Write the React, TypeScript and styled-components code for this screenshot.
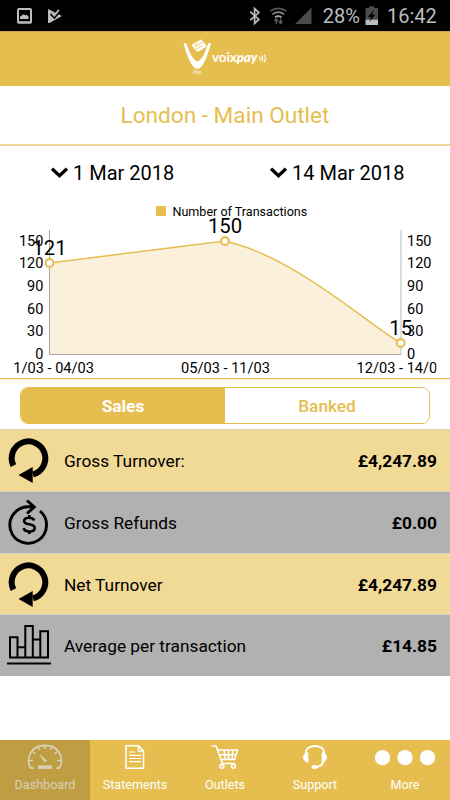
import React from "react";
import styled, { createGlobalStyle } from "styled-components";

const GOLD = "#e6be50";

const GlobalStyle = createGlobalStyle`
  * { box-sizing: border-box; }
  body { margin: 0; background: #fff; font-family: Roboto, sans-serif; color: #000; }
  svg { display: block; flex: none; }
`;

const Screen = styled.div`
  width: 450px;
  height: 800px;
  display: flex;
  flex-direction: column;
  background: #fff;
  overflow: hidden;
`;

const StatusBar = styled.div`
  height: 31px;
  flex: none;
  background: #000;
  color: #bdbdbd;
  font-size: 20px;
  line-height: 31px;
  display: flex;
  justify-content: space-between;
`;

const Battery = styled.span`
  margin-right: 5px;
`;

const Clock = styled.span`
  width: 49px;
  margin-left: 8px;
  white-space: nowrap;
`;

const StatusGroup = styled.div`
  display: flex;
  padding: 1px 14px 0 0;
`;

const Header = styled.header`
  height: 55px;
  flex: none;
  background: ${GOLD};
  border-top: 1px solid #cfa945;
  display: flex;
  justify-content: center;
`;

const Title = styled.h1`
  margin: 0;
  height: 60px;
  flex: none;
  border-bottom: 2px solid #f0d696;
  color: ${GOLD};
  font-size: 22.6px;
  font-weight: 400;
  line-height: 59px;
  text-align: center;
`;

const DateRow = styled.div`
  height: 54px;
  flex: none;
  display: grid;
  grid-template-columns: 219px 1fr;
  padding-left: 51px;
`;

const DatePicker = styled.div`
  display: flex;
  align-items: center;
  gap: 5px;
  font-size: 20px;
  line-height: 54px;
`;

const ChartPanel = styled.div`
  height: 179px;
  flex: none;
  border-bottom: 1px solid ${GOLD};
  box-shadow: 0 1px 0 #faf0d8;
`;

const Segments = styled.div`
  margin: 8px 20px 5px;
  height: 37px;
  flex: none;
  display: grid;
  grid-template-columns: 1fr 1fr;
  border: 1px solid ${GOLD};
  border-radius: 8px;
  overflow: hidden;
`;

const Segment = styled.div<{ $active?: boolean }>`
  background: ${(p) => (p.$active ? GOLD : "#fff")};
  color: ${(p) => (p.$active ? "#fff" : GOLD)};
  font-size: 17.3px;
  font-weight: ${(p) => (p.$active ? 700 : 500)};
  line-height: 37px;
  text-align: center;
`;

const Row = styled.div<{ $tone: "gold" | "grey" }>`
  height: 61.8px;
  flex: none;
  display: flex;
  align-items: center;
  padding: 1.4px 13px 0 6px;
  border-top: 1px solid #d9d2bd;
  background: ${(p) => (p.$tone === "gold" ? "#f1d996" : "#b1b1b1")};
`;

const RowLabel = styled.span`
  flex: 1;
  margin-left: 12px;
  font-size: 17.3px;
`;

const Amount = styled.span`
  font-size: 17.35px;
  font-weight: 700;
`;

const TabBar = styled.nav`
  height: 60px;
  flex: none;
  margin-top: auto;
  display: grid;
  grid-template-columns: repeat(5, 1fr);
  background: ${GOLD};
`;

const Tab = styled.div<{ $active?: boolean }>`
  display: flex;
  flex-direction: column;
  align-items: center;
  background: ${(p) => (p.$active ? "#bf9d42" : "transparent")};
  color: ${(p) => (p.$active ? "#d8d0bb" : "#fff")};
  font-size: 12.6px;
  line-height: 16px;
  padding-top: 3px;
  gap: 8px;
`;

const NotificationIcons = () => (
  <svg width="80" height="31" viewBox="0 0 80 31">
    <rect x="18" y="9" width="13" height="13.5" rx="1" fill="none" stroke="#bdbdbd" strokeWidth="2" />
    <path d="M17.5 21.5h14v2h-14zM20 19v-2.2l2.2-1.5 1.6-1.1 1.5 1.3 1.4-.8 1.8 1.8V19z" fill="#bdbdbd" />
    <path d="M48 9l14 7-12.5 7H48z" fill="#bdbdbd" />
    <path d="M51 13.7l3.4 3.2 5.3-6.5" fill="none" stroke="#000" strokeWidth="3.2" />
    <path d="M51.8 13.2l2.6 2.5 4.5-6" fill="none" stroke="#bdbdbd" strokeWidth="1.8" />
  </svg>
);

const SignalIcons = () => (
  <svg width="78" height="30" viewBox="245 1 78 30">
    <path d="M250.2 11.6l8.6 7.8-4.2 4V8.6l4.2 4-8.6 7.6" fill="none" stroke="#bdbdbd" strokeWidth="1.7" />
    <g fill="none" strokeWidth="1.7">
      <path d="M270.3 11.2c4.8-3.7 11.2-3.7 16 0" stroke="#555" />
      <path d="M272.4 14.4c3.6-2.8 8.2-2.8 11.8 0" stroke="#888" />
      <path d="M275 17.4c2.2-1.6 4.5-1.6 6.6 0" stroke="#aaa" />
      <path d="M276.3 24v-5m-2 2l2-2 2 2M280.6 18.5v5m-2-2l2 2 2-2" stroke="#5c5c5c" strokeWidth="1.4" />
    </g>
    <path d="M295 24L311.5 7.5V24z" fill="#4b4b4b" />
  </svg>
);

const BatteryIcon = () => (
  <svg width="14" height="30" viewBox="0 1 14 30">
    <path d="M4 8V6.3h5V8h4v12H.5V8z" fill="#4b4b4b" />
    <path d="M.5 19.7H13V25H.5z" fill="#bdbdbd" />
    <path d="M8.7 9.5L3 17h3.3L4.3 22l6-7.2H7z" fill="#000" />
  </svg>
);

const Logo = () => (
  <svg width="90" height="54" viewBox="180 32 90 54">
    <path d="M183.6 43.2c1.8-.4 2.600.1 3.200 1.600 2.600 7.200 6.600 16.400 10.700 16.400s7.900-9.200 10.200-16.400c.5-1.500 1.400-2 3.200-1.600-2.500 9.700-7.300 25.600-13.400 25.600s-11.400-15.900-13.900-25.600z" fill="#fff" />
    <g transform="translate(199.200 46) rotate(-30)">
      <rect x="-6" y="-4.8" width="11.5" height="6.5" rx="1.2" fill="#fff" />
      <rect x="-5" y="-1.5" width="11.5" height="6.2" rx="1.2" fill="#fff" stroke={GOLD} strokeWidth=".7" />
      <path d="M-3.5 1.2h6M-4-2.8h4" stroke={GOLD} strokeWidth=".8" />
    </g>
    <text x="193" y="74.4" fill="#fff" opacity=".8" fontSize="5.4" fontStyle="italic" fontWeight="700" fontFamily="Lato, sans-serif">Pay</text>
    <text x="212" y="62.400" fill="#fff" fontSize="13.4" fontWeight="700" fontFamily="Lato, sans-serif" textLength="45.5">
      voix<tspan fontStyle="italic" fontWeight="900">pay</tspan>
    </text>
    <path d="M259.5 56.5q1.300 2 0 4M261.700 55.5q2 3 0 6M264 54.5q2.800 4 0 8" fill="none" stroke="#fff" strokeWidth="1.100" />
  </svg>
);

const Chevron = () => (
  <svg width="17" height="12" viewBox="0 0 17 12">
    <path d="M1 1.700l7.500 7L16 1.700" fill="none" stroke="#000" strokeWidth="3.300" />
  </svg>
);

const TICKS = [150, 120, 90, 60, 30, 0];
const POINTS = [
  { x: 49.5, y: 263, value: "121" },
  { x: 225, y: 241, value: "150" },
  { x: 400.7, y: 343, value: "15" },
];
const CURVE = "M49.5 263L225 241C295 257 365.8 322.6 400.7 343";

const Chart = () => (
  <svg width="450" height="178" viewBox="0 200 450 178" fontFamily="Roboto, sans-serif">
    <defs>
      <clipPath id="plot"><rect x="13" y="200" width="423.5" height="178" /></clipPath>
    </defs>
    <rect x="156" y="206" width="10" height="10" fill={GOLD} />
    <text x="172.5" y="216.3" fontSize="12.55">Number of Transactions</text>
    <path d={`${CURVE}V354.5H49.5z`} fill="#faf0dc" />
    <path d="M49.5 230V354.5H401" fill="none" stroke="#aaa59a" />
    <path d="M401 230V354.5" stroke="#cfcfcf" strokeWidth="1.4" />
    <path d={CURVE} fill="none" stroke={GOLD} strokeWidth="1.5" />
    {TICKS.map((tick, i) => (
      <g key={tick} fontSize="14.5">
        <text x="43.4" y={245.5 + i * 22.7} textAnchor="end">{tick}</text>
        <text x="407" y={245.5 + i * 22.7}>{tick}</text>
      </g>
    ))}
    <g fontSize="14.6" textAnchor="middle" clipPath="url(#plot)">
      <text x="49.5" y="373">01/03 - 04/03</text>
      <text x="225.5" y="373">05/03 - 11/03</text>
      <text x="401" y="373">12/03 - 14/03</text>
    </g>
    {POINTS.map((p) => (
      <g key={p.value}>
        <circle cx={p.x} cy={p.y} r="3.9" fill="#fff" stroke={GOLD} strokeWidth="2.1" />
        <text x={p.x} y={p.y - 8.5} fontSize="20.3" textAnchor="middle">{p.value}</text>
      </g>
    ))}
  </svg>
);

const TurnoverIcon = () => (
  <svg width="46" height="50" viewBox="0 0 46 50">
    <path d="M6.9 29A16.8 16.8 0 1 1 26.5 37.8" fill="none" stroke="#000" strokeWidth="6" transform="translate(.5 .6)" />
    <path d="M12.5 39L26.7 31v16z" />
  </svg>
);

const RefundIcon = () => (
  <svg width="46" height="50" viewBox="0 0 46 50">
    <g fill="none" stroke="#000" strokeWidth="2.9">
      <path d="M34 13A18.3 18.3 0 1 1 22.5 8.7H28" />
      <path d="M21 2.5l7.3 6.5-7.3 6.5" />
      <path d="M28.2 22.5c-.7-1.9-2.600-2.800-5.200-2.800-3.100 0-4.900 1.300-4.900 3.300 0 4.900 10.600 1.700 10.600 6.900 0 2.300-2.200 3.600-5.400 3.600-3 0-5.100-1.200-5.700-3.300M23.300 17v3M23.300 33v3" strokeWidth="2.600" />
    </g>
  </svg>
);

const BarsIcon = () => (
  <svg width="46" height="50" viewBox="0 0 46 50">
    <g fill="none" stroke="#000" strokeWidth="2">
      <path d="M4 36.5V16.300h7.500V36.500M19.300 36.500V5h7.500v31.500M34.300 36.500V10.300h7.700V36.500zM3 36.500H43M11.500 26.300h7.800M26.800 18.500h7.500" />
      <path d="M1 42.500h44" />
    </g>
  </svg>
);

const GaugeIcon = () => (
  <svg width="36" height="26" viewBox="0 0 36 26" fill="none" stroke="currentColor">
    <path d="M6.500 25H3.800C.5 21 1 13 4.500 8.500 10.500.500 25.500.500 31.500 8.500 35 13 35.500 21 32.200 25H29.500" strokeWidth="1.800" />
    <path d="M2 17.500h4M30 17.500h4M5.500 8.500l3 2.400M30.500 8.500l-3 2.400M11 4l1.700 3M25 4l-1.700 3M18 2.500v3.500" strokeWidth="1.500" />
    <path d="M13 12l6.500 5.500-1.700 1.500z" fill="currentColor" />
    <path d="M11 24.200h14" strokeWidth="3.400" />
  </svg>
);

const StatementIcon = () => (
  <svg width="20" height="26" viewBox="0 0 20 26" fill="none" stroke="currentColor">
    <path d="M1 2.800h12.500l5 5V25.200H1zM13.500 2.800V8h5" strokeWidth="1.500" />
    <path d="M4 9h6M4 12.300h12M4 15.500h12M4 18.700h12" strokeWidth="1.200" />
  </svg>
);

const CartIcon = () => (
  <svg width="30" height="26" viewBox="0 0 30 26" fill="none" stroke="currentColor" strokeWidth="1.600">
    <path d="M1.500 3H6l6.500 17.500H25M7.500 7h20L24.500 16.500H11M9.500 11.700h16.500M14 7l1.500 9.500M18.500 7v9.500M23 7l-1 9.500M12.500 20.500l-1 2" />
    <circle cx="12" cy="23.300" r="1.900" />
    <circle cx="23.500" cy="23.300" r="1.900" />
  </svg>
);

const HeadsetIcon = () => (
  <svg width="26" height="26" viewBox="0 0 26 26">
    <path d="M4 12C3 6 7 3 13 3s10 3 9 9M21.500 18c-1 3.700-4 6-8 6" fill="none" stroke="currentColor" strokeWidth="1.900" />
    <path d="M6.300 9v11C3 19 1 17 1 14.500S3 10 6.300 9zM19.700 9v11c3.300-1 5.300-3 5.300-5.500s-2-4.500-5.300-5.500z" fill="currentColor" />
    <ellipse cx="12.500" cy="24" rx="3" ry="2" fill="currentColor" />
  </svg>
);

const MoreIcon = () => (
  <svg width="62" height="26" viewBox="0 0 62 26" fill="currentColor">
    <circle cx="8.500" cy="14.700" r="7.600" />
    <circle cx="31" cy="14.700" r="7.600" />
    <circle cx="53.500" cy="14.700" r="7.600" />
  </svg>
);

const ROWS = [
  { label: "Gross Turnover:", amount: "£4,247.89", tone: "gold", Icon: TurnoverIcon },
  { label: "Gross Refunds", amount: "£0.00", tone: "grey", Icon: RefundIcon },
  { label: "Net Turnover", amount: "£4,247.89", tone: "gold", Icon: TurnoverIcon },
  { label: "Average per transaction", amount: "£14.85", tone: "grey", Icon: BarsIcon },
] as const;

const TABS = [
  { label: "Dashboard", Icon: GaugeIcon },
  { label: "Statements", Icon: StatementIcon },
  { label: "Outlets", Icon: CartIcon },
  { label: "Support", Icon: HeadsetIcon },
  { label: "More", Icon: MoreIcon },
];

export default function App() {
  return (
    <Screen>
      <GlobalStyle />
      <StatusBar>
        <NotificationIcons />
        <StatusGroup>
          <SignalIcons />
          <Battery>28%</Battery>
          <BatteryIcon />
          <Clock>16:42</Clock>
        </StatusGroup>
      </StatusBar>
      <Header><Logo /></Header>
      <Title>London - Main Outlet</Title>
      <DateRow>
        <DatePicker><Chevron />1 Mar 2018</DatePicker>
        <DatePicker><Chevron />14 Mar 2018</DatePicker>
      </DateRow>
      <ChartPanel><Chart /></ChartPanel>
      <Segments>
        <Segment $active>Sales</Segment>
        <Segment>Banked</Segment>
      </Segments>
      {ROWS.map(({ label, amount, tone, Icon }) => (
        <Row key={label} $tone={tone}>
          <Icon />
          <RowLabel>{label}</RowLabel>
          <Amount>{amount}</Amount>
        </Row>
      ))}
      <TabBar>
        {TABS.map(({ label, Icon }, i) => (
          <Tab key={label} $active={i === 0}>
            <Icon />
            <span>{label}</span>
          </Tab>
        ))}
      </TabBar>
    </Screen>
  );
}
